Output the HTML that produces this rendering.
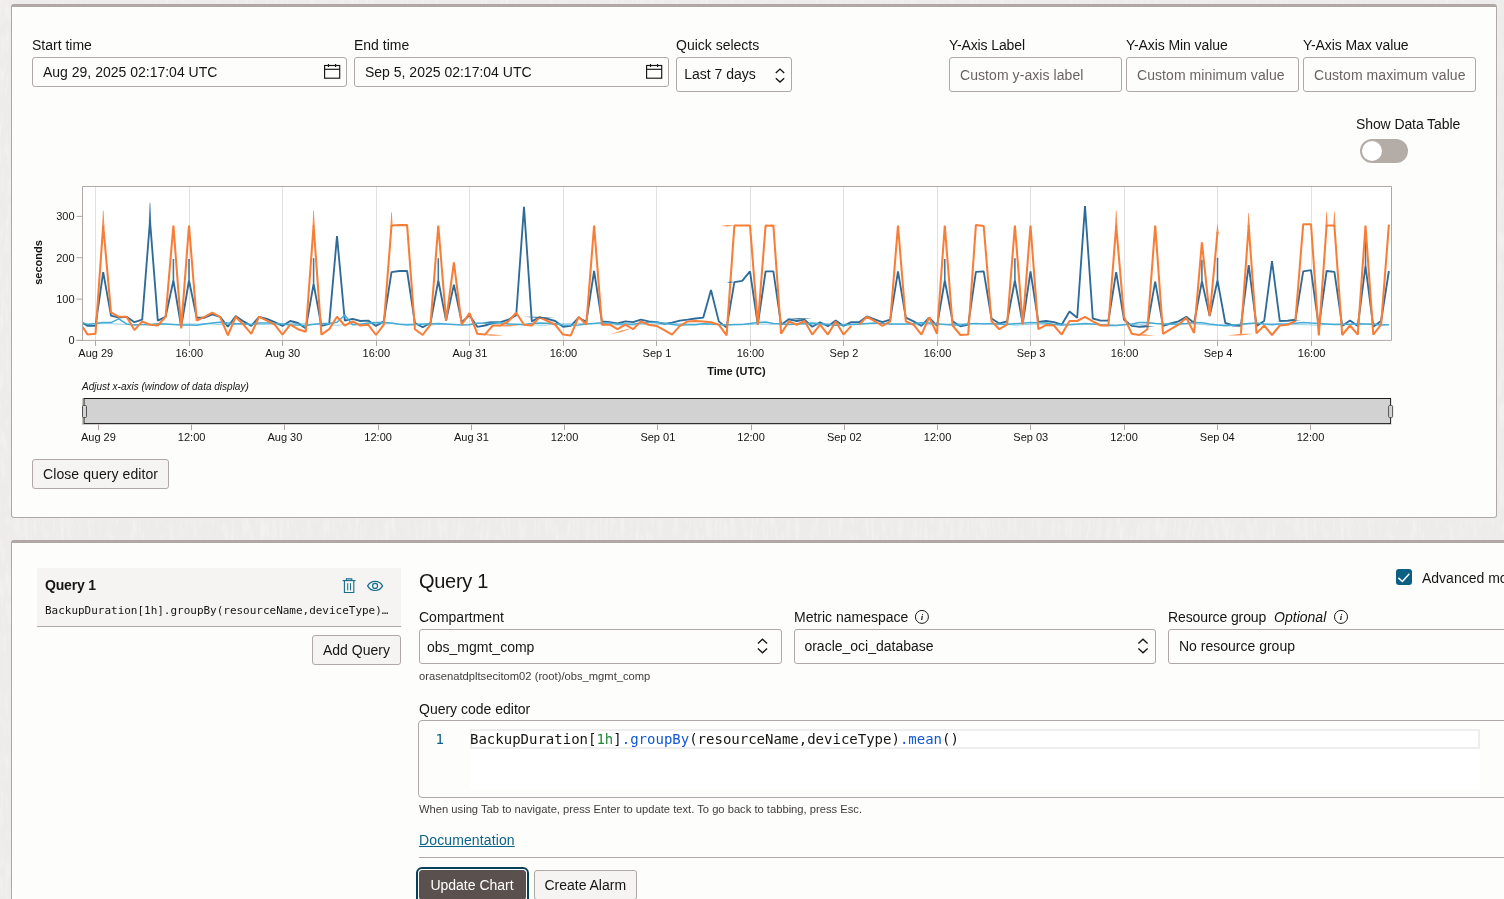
<!DOCTYPE html>
<html lang="en">
<head>
<meta charset="utf-8">
<title>Metrics Explorer</title>
<style>
*{box-sizing:border-box;}
html,body{margin:0;padding:0;overflow:hidden;}
body{width:1504px;height:899px;overflow:hidden;position:relative;background:#eeeceb;
 font-family:"Liberation Sans",sans-serif;font-size:14px;color:#161513;}
.abs,.panel,.lbl,.inp,.btn,.sel,.txt{position:absolute;}
.panel{background:#fdfdfc;border:1px solid #b0a8a4;border-top:3px solid #b0a8a4;border-radius:3px;}
.lbl{font-size:14px;line-height:16px;white-space:nowrap;color:#161513;}
.inp,.sel{border:1px solid #b0a8a4;border-radius:3px;background:#fdfdfc;font-size:14px;white-space:nowrap;color:#161513;}
.inp span,.sel span,.btn span{position:absolute;line-height:16px;white-space:nowrap;}
.ph{color:#6a6461;}
.btn{border:1px solid #b0a8a4;border-radius:3px;background:#f5f4f2;font-size:14px;color:#161513;}
.small{font-size:11.2px;line-height:13px;color:#3f3b39;white-space:nowrap;position:absolute;}
svg{position:absolute;left:0;top:0;overflow:visible;}
svg text{font-family:"Liberation Sans",sans-serif;fill:#161513;}
.tk{font-size:11px;}
.b{font-weight:bold;}
.adj{font-size:10px;font-style:italic;}
.mono{font-family:"DejaVu Sans Mono","Liberation Mono",monospace;}
</style>
</head>
<body>
<div id="root" style="position:absolute;left:0;top:0;width:1504px;height:899px;overflow:hidden;will-change:transform;">

<!-- subtle page background texture -->
<svg width="1504" height="899" viewBox="0 0 1504 899" aria-hidden="true">
<defs><filter id="tx" x="0" y="0" width="100%" height="100%" color-interpolation-filters="sRGB">
<feTurbulence type="turbulence" baseFrequency="0.2 0.035" numOctaves="2" seed="11" result="n"/>
<feColorMatrix in="n" type="matrix" values="0 0 0 0 1  0 0 0 0 1  0 0 0 0 1  0.9 0 0 0 -0.12"/>
</filter></defs>
<rect x="0" y="0" width="1504" height="899" fill="#ffffff" filter="url(#tx)" opacity="0.55"/>
</svg>
<!-- ============ Panel 1 : chart ============ -->
<div class="panel" style="left:11px;top:4px;width:1486px;height:514px;"></div>

<div class="lbl" style="left:32px;top:37px;">Start time</div>
<div class="inp" style="left:32px;top:57px;width:315px;height:30px;"><span style="left:10px;top:6px;">Aug 29, 2025 02:17:04 UTC</span></div>
<div class="lbl" style="left:354px;top:37px;">End time</div>
<div class="inp" style="left:354px;top:57px;width:315px;height:30px;"><span style="left:10px;top:6px;">Sep 5, 2025 02:17:04 UTC</span></div>
<div class="lbl" style="left:676px;top:37px;">Quick selects</div>
<div class="sel" style="left:676px;top:57px;width:116px;height:35px;"><span style="left:7.2px;top:7.5px;">Last 7 days</span></div>

<div class="lbl" style="left:949px;top:37px;letter-spacing:-0.12px;">Y-Axis Label</div>
<div class="inp" style="left:949px;top:57px;width:173px;height:35px;"><span class="ph" style="left:10px;top:9px;letter-spacing:0.07px;">Custom y-axis label</span></div>
<div class="lbl" style="left:1126px;top:37px;letter-spacing:-0.08px;">Y-Axis Min value</div>
<div class="inp" style="left:1126px;top:57px;width:173px;height:35px;"><span class="ph" style="left:10px;top:9px;letter-spacing:0.07px;">Custom minimum value</span></div>
<div class="lbl" style="left:1303px;top:37px;letter-spacing:-0.08px;">Y-Axis Max value</div>
<div class="inp" style="left:1303px;top:57px;width:173px;height:35px;"><span class="ph" style="left:10px;top:9px;letter-spacing:0.07px;">Custom maximum value</span></div>

<div class="lbl" style="left:1356px;top:116px;letter-spacing:-0.1px;">Show Data Table</div>
<div class="abs" style="left:1360px;top:139px;width:48px;height:24px;border-radius:12px;background:#b4aca7;">
  <div class="abs" style="left:2px;top:2px;width:20px;height:20px;border-radius:10px;background:#ffffff;"></div>
</div>

<div class="btn" style="left:32px;top:459px;width:137px;height:30px;"><span style="left:10px;top:6px;letter-spacing:0.08px;">Close query editor</span></div>

<!-- ============ Panel 2 : query editor ============ -->
<div class="panel" style="left:11px;top:540px;width:1560px;height:420px;"></div>

<div class="abs" style="left:37px;top:568px;width:364px;height:59px;background:#f5f4f2;border-bottom:1px solid #b0a8a4;"></div>
<div class="lbl" style="left:45px;top:577px;font-weight:bold;letter-spacing:-0.18px;">Query 1</div>
<div class="abs mono" style="left:45px;top:604px;font-size:10.98px;line-height:14px;white-space:nowrap;">BackupDuration[1h].groupBy(resourceName,deviceType)…</div>
<div class="btn" style="left:312px;top:635px;width:89px;height:30px;"><span style="left:10px;top:6px;">Add Query</span></div>

<div class="abs" style="left:419px;top:569px;font-size:20px;line-height:24px;white-space:nowrap;letter-spacing:-0.3px;">Query 1</div>

<div class="abs" style="left:1396px;top:569px;width:16px;height:16px;border-radius:3px;background:#0b5f82;"></div>
<div class="lbl" style="left:1422px;top:570px;">Advanced mode</div>

<div class="lbl" style="left:419px;top:609px;">Compartment</div>
<div class="sel" style="left:419px;top:629px;width:363px;height:35px;"><span style="left:7px;top:9px;">obs_mgmt_comp</span></div>
<div class="small" style="left:419px;top:670px;">orasenatdpltsecitom02 (root)/obs_mgmt_comp</div>

<div class="lbl" style="left:794px;top:609px;">Metric namespace</div>
<div class="sel" style="left:794px;top:629px;width:362px;height:35px;"><span style="left:9.4px;top:8px;">oracle_oci_database</span></div>

<div class="lbl" style="left:1168px;top:609px;letter-spacing:-0.1px;">Resource group&nbsp; <i style="letter-spacing:0;margin-left:0.3px;">Optional</i></div>
<div class="sel" style="left:1168px;top:629px;width:380px;height:35px;"><span style="left:10px;top:8px;">No resource group</span></div>

<div class="lbl" style="left:419px;top:701px;">Query code editor</div>
<div class="abs" style="left:418px;top:720px;width:1120px;height:78px;border:1px solid #b0a8a4;border-radius:4px;background:#fdfdfc;"></div>
<div class="abs" style="left:470px;top:729px;width:1010px;height:60px;background:#ffffff;"></div>
<div class="abs" style="left:470px;top:729px;width:1010px;height:20px;border:2px solid #eeeeee;"></div>
<div class="abs mono" style="left:432px;top:731px;width:12px;text-align:right;font-size:14px;line-height:17px;color:#0b5f82;">1</div>
<div class="abs mono" style="left:470px;top:731px;font-size:14px;line-height:17px;white-space:pre;">BackupDuration[<span style="color:#21893a">1h</span>]<span style="color:#1157d6">.groupBy</span>(resourceName,deviceType)<span style="color:#1157d6">.mean</span>()</div>

<div class="small" style="left:419px;top:803px;">When using Tab to navigate, press Enter to update text. To go back to tabbing, press Esc.</div>
<div class="lbl" style="left:419px;top:832px;color:#0c6387;text-decoration:underline;letter-spacing:0.12px;">Documentation</div>
<div class="abs" style="left:419px;top:857px;width:1120px;height:1px;background:#b0a8a4;"></div>

<div class="abs" style="left:416px;top:867px;width:113px;height:40px;border:2px solid #06405b;border-radius:6px;background:#fdfdfc;"></div>
<div class="btn" style="left:419px;top:870px;width:107px;height:30px;background:#5a514e;border-color:#5a514e;color:#ffffff;"><span style="left:10.4px;top:6px;">Update Chart</span></div>
<div class="btn" style="left:534px;top:870px;width:103px;height:30px;"><span style="left:9.4px;top:6px;">Create Alarm</span></div>

<!-- ============ SVG overlay: chart + icons ============ -->
<svg width="1504" height="899" viewBox="0 0 1504 899">
<g>
<rect x="82.5" y="186.5" width="1309" height="154" fill="#ffffff" stroke="none"/>
<line x1="95.50" y1="187" x2="95.50" y2="340" stroke="#e1e1e1" stroke-width="1"/>
<line x1="189.50" y1="187" x2="189.50" y2="340" stroke="#e1e1e1" stroke-width="1"/>
<line x1="282.50" y1="187" x2="282.50" y2="340" stroke="#e1e1e1" stroke-width="1"/>
<line x1="376.50" y1="187" x2="376.50" y2="340" stroke="#e1e1e1" stroke-width="1"/>
<line x1="469.50" y1="187" x2="469.50" y2="340" stroke="#e1e1e1" stroke-width="1"/>
<line x1="563.50" y1="187" x2="563.50" y2="340" stroke="#e1e1e1" stroke-width="1"/>
<line x1="656.50" y1="187" x2="656.50" y2="340" stroke="#e1e1e1" stroke-width="1"/>
<line x1="750.50" y1="187" x2="750.50" y2="340" stroke="#e1e1e1" stroke-width="1"/>
<line x1="843.50" y1="187" x2="843.50" y2="340" stroke="#e1e1e1" stroke-width="1"/>
<line x1="937.50" y1="187" x2="937.50" y2="340" stroke="#e1e1e1" stroke-width="1"/>
<line x1="1030.50" y1="187" x2="1030.50" y2="340" stroke="#e1e1e1" stroke-width="1"/>
<line x1="1124.50" y1="187" x2="1124.50" y2="340" stroke="#e1e1e1" stroke-width="1"/>
<line x1="1217.50" y1="187" x2="1217.50" y2="340" stroke="#e1e1e1" stroke-width="1"/>
<line x1="1311.50" y1="187" x2="1311.50" y2="340" stroke="#e1e1e1" stroke-width="1"/>
</g>
<g stroke-linecap="butt">
<path d="M82.5,323.0 L87.7,325.9 L95.5,325.9 L103.2,272.2 L111.0,315.6 L118.8,317.7 L126.6,316.8 L134.4,322.2 L142.2,319.7 L150.0,220.5 L157.8,320.6 L165.6,316.8 L173.4,280.5 L181.2,326.8 L189.0,280.5 L196.7,317.7 L204.5,317.7 L212.3,314.4 L220.1,316.8 L227.9,326.8 L235.7,316.0 L243.5,321.4 L251.3,325.9 L259.1,316.8 L266.9,318.9 L274.7,322.2 L282.5,325.9 L290.2,321.0 L298.0,323.0 L305.8,328.4 L313.6,283.8 L321.4,325.9 L329.2,323.9 L337.0,236.2 L344.8,320.6 L352.6,318.9 L360.4,321.0 L368.2,320.6 L376.0,325.9 L383.8,321.4 L391.5,272.2 L399.3,271.0 L407.1,271.0 L414.9,323.0 L422.7,327.2 L430.5,323.0 L438.3,280.5 L446.1,320.6 L453.9,284.6 L461.7,322.2 L469.5,315.2 L477.3,326.8 L485.0,325.5 L492.8,323.0 L500.6,322.2 L508.4,319.7 L516.2,315.2 L524.0,206.9 L531.8,321.4 L539.6,317.3 L547.4,318.9 L555.2,321.0 L563.0,326.8 L570.8,325.9 L578.6,317.7 L586.3,321.8 L594.1,271.0 L601.9,321.4 L609.7,322.2 L617.5,323.5 L625.3,321.4 L633.1,322.2 L640.9,319.7 L648.7,321.4 L656.5,322.2 L664.3,323.9 L672.1,322.6 L679.9,320.6 L687.6,319.7 L695.4,318.5 L703.2,317.7 L711.0,290.0 L718.8,321.4 L726.6,327.6 L734.4,282.1 L742.2,280.9 L750.0,271.4 L757.8,324.7 L765.6,271.4 L773.4,271.4 L781.1,324.7 L788.9,319.3 L796.7,321.0 L804.5,319.7 L812.3,326.8 L820.1,322.2 L827.9,326.3 L835.7,320.6 L843.5,325.9 L851.3,322.2 L859.1,322.2 L866.9,316.4 L874.6,319.3 L882.4,322.2 L890.2,319.7 L898.0,271.4 L905.8,317.7 L913.6,321.4 L921.4,325.9 L929.2,317.7 L937.0,325.9 L944.8,280.5 L952.6,321.4 L960.4,326.3 L968.2,324.7 L975.9,271.8 L983.7,271.4 L991.5,318.5 L999.3,323.5 L1007.1,321.4 L1014.9,280.5 L1022.7,323.9 L1030.5,271.4 L1038.3,321.8 L1046.1,321.0 L1053.9,322.2 L1061.7,324.7 L1069.5,311.5 L1077.2,317.7 L1085.0,206.1 L1092.8,318.5 L1100.6,320.6 L1108.4,320.6 L1116.2,272.2 L1124.0,319.7 L1131.8,325.9 L1139.6,326.8 L1147.4,325.9 L1155.2,281.7 L1163.0,325.9 L1170.7,323.5 L1178.5,321.4 L1186.3,316.8 L1194.1,323.0 L1201.9,281.3 L1209.7,316.0 L1217.5,280.5 L1225.3,323.0 L1233.1,325.5 L1240.9,325.9 L1248.7,265.2 L1256.5,325.9 L1264.2,321.0 L1272.0,261.0 L1279.8,321.0 L1287.6,320.6 L1295.4,319.7 L1303.2,271.4 L1311.0,270.1 L1318.8,326.8 L1326.6,271.0 L1334.4,271.8 L1342.2,325.9 L1350.0,320.6 L1357.8,325.9 L1365.5,266.0 L1373.3,326.8 L1381.1,321.0 L1388.9,271.0" fill="none" stroke="#2e6b98" stroke-width="1.85" stroke-linejoin="bevel"/>
<path d="M148.84,222.0 L149.69,202.8 L150.29,202.8 L151.14,222.0 Z" fill="#2e6b98" opacity="0.92"/>
<path d="M173.4,280.5 L173.4,259.0" stroke="#2e6b98" stroke-width="1.6" opacity="0.9"/>
<path d="M189.0,280.5 L189.0,259.0" stroke="#2e6b98" stroke-width="1.6" opacity="0.9"/>
<path d="M313.6,283.8 L313.6,258.2" stroke="#2e6b98" stroke-width="1.6" opacity="0.9"/>
<path d="M438.3,280.5 L438.3,258.2" stroke="#2e6b98" stroke-width="1.6" opacity="0.9"/>
<path d="M944.8,280.5 L944.8,259.0" stroke="#2e6b98" stroke-width="1.6" opacity="0.9"/>
<path d="M1014.9,280.5 L1014.9,258.2" stroke="#2e6b98" stroke-width="1.6" opacity="0.9"/>
<path d="M1201.9,281.3 L1201.9,259.8" stroke="#2e6b98" stroke-width="1.6" opacity="0.9"/>
<path d="M1217.5,280.5 L1217.5,257.7" stroke="#2e6b98" stroke-width="1.6" opacity="0.9"/>
<path d="M1365.5,266.0 L1365.5,241.2" stroke="#2e6b98" stroke-width="1.6" opacity="0.9"/>
<path d="M82.5,323.5 L87.7,323.8 L95.5,324.0 L103.2,323.6 L111.0,323.7 L118.8,324.1 L126.6,324.4 L134.4,324.6 L142.2,324.6 L150.0,325.0 L157.8,324.4 L165.6,324.3 L173.4,324.3 L181.2,324.2 L189.0,323.9 L196.7,324.0 L204.5,323.8 L212.3,323.9 L220.1,324.7 L227.9,324.4 L235.7,324.4 L243.5,324.4 L251.3,324.7 L259.1,324.6 L266.9,324.3 L274.7,324.1 L282.5,324.0 L290.2,323.6 L298.0,323.5 L305.8,323.8 L313.6,324.5 L321.4,324.6 L329.2,324.6 L337.0,325.3 L344.8,324.6 L352.6,324.1 L360.4,323.9 L368.2,323.7 L376.0,323.7 L383.8,324.0 L391.5,323.5 L399.3,324.2 L407.1,324.0 L414.9,324.1 L422.7,324.9 L430.5,325.0 L438.3,324.4 L446.1,324.4 L453.9,324.7 L461.7,324.4 L469.5,324.2 L477.3,323.3 L485.0,323.4 L492.8,324.2 L500.6,323.8 L508.4,323.9 L516.2,324.5 L524.0,325.0 L531.8,324.8 L539.6,325.1 L547.4,325.0 L555.2,323.8 L563.0,323.8 L570.8,323.7 L578.6,323.2 L586.3,323.8 L594.1,323.6 L601.9,323.9 L609.7,324.8 L617.5,325.0 L625.3,325.1 L633.1,325.1 L640.9,324.6 L648.7,324.6 L656.5,324.2 L664.3,324.2 L672.1,323.3 L679.9,323.8 L687.6,323.9 L695.4,324.0 L703.2,324.0 L711.0,324.7 L718.8,324.4 L726.6,324.9 L734.4,324.8 L742.2,324.5 L750.0,324.7 L757.8,324.0 L765.6,324.1 L773.4,324.2 L781.1,323.4 L788.9,324.2 L796.7,324.2 L804.5,324.3 L812.3,324.7 L820.1,325.1 L827.9,324.9 L835.7,324.7 L843.5,324.2 L851.3,324.5 L859.1,323.8 L866.9,323.9 L874.6,323.9 L882.4,323.5 L890.2,324.0 L898.0,324.3 L905.8,324.4 L913.6,324.4 L921.4,325.0 L929.2,324.7 L937.0,324.6 L944.8,324.3 L952.6,323.8 L960.4,323.8 L968.2,323.6 L975.9,323.7 L983.7,323.4 L991.5,324.0 L999.3,324.1 L1007.1,324.3 L1014.9,325.1 L1022.7,324.8 L1030.5,324.3 L1038.3,324.1 L1046.1,324.5 L1053.9,324.3 L1061.7,323.8 L1069.5,324.1 L1077.2,324.0 L1085.0,324.4 L1092.8,324.1 L1100.6,324.3 L1108.4,324.4 L1116.2,325.2 L1124.0,324.6 L1131.8,324.5 L1139.6,324.7 L1147.4,323.7 L1155.2,323.3 L1163.0,324.0 L1170.7,323.2 L1178.5,324.0 L1186.3,324.1 L1194.1,323.9 L1201.9,324.4 L1209.7,325.2 L1217.5,325.0 L1225.3,324.8 L1233.1,324.7 L1240.9,324.5 L1248.7,324.1 L1256.5,323.5 L1264.2,324.1 L1272.0,323.7 L1279.8,324.0 L1287.6,324.7 L1295.4,324.7 L1303.2,324.7 L1311.0,324.9 L1318.8,325.3 L1326.6,324.2 L1334.4,324.1 L1342.2,323.6 L1350.0,324.2 L1357.8,323.9 L1365.5,324.1 L1373.3,323.6 L1381.1,324.3 L1388.9,324.8" fill="none" stroke="#43abd4" stroke-width="1" stroke-linejoin="round" opacity="0.55"/>
<path d="M82.5,322.6 L87.7,324.4 L95.5,323.6 L103.2,322.4 L111.0,322.6 L118.8,318.9 L126.6,323.9 L134.4,324.9 L142.2,324.6 L150.0,324.5 L157.8,323.7 L165.6,323.9 L173.4,324.5 L181.2,324.9 L189.0,325.0 L196.7,325.2 L204.5,324.1 L212.3,322.9 L220.1,322.3 L227.9,322.9 L235.7,323.8 L243.5,323.8 L251.3,324.4 L259.1,323.1 L266.9,323.1 L274.7,323.3 L282.5,324.1 L290.2,324.9 L298.0,325.1 L305.8,325.4 L313.6,324.3 L321.4,323.5 L329.2,323.4 L337.0,322.2 L344.8,315.2 L352.6,324.7 L360.4,324.2 L368.2,323.0 L376.0,322.6 L383.8,322.6 L391.5,323.1 L399.3,324.2 L407.1,325.0 L414.9,324.6 L422.7,324.1 L430.5,323.9 L438.3,323.6 L446.1,324.1 L453.9,324.5 L461.7,324.9 L469.5,324.7 L477.3,323.2 L485.0,323.0 L492.8,322.6 L500.6,322.8 L508.4,324.0 L516.2,324.3 L524.0,324.5 L531.8,323.4 L539.6,322.9 L547.4,323.2 L555.2,323.7 L563.0,325.1 L570.8,325.2 L578.6,325.0 L586.3,324.1 L594.1,323.4 L601.9,322.8 L609.7,323.1 L617.5,324.0 L625.3,324.1 L633.1,324.2 L640.9,322.9 L648.7,322.4 L656.5,322.3 L664.3,323.2 L672.1,324.6 L679.9,325.2 L687.6,324.8 L695.4,324.7 L703.2,323.7 L711.0,323.9 L718.8,324.4 L726.6,325.0 L734.4,324.6 L742.2,324.6 L750.0,323.5 L757.8,322.6 L765.6,322.1 L773.4,323.4 L781.1,323.9 L788.9,324.4 L796.7,324.0 L804.5,323.5 L812.3,323.0 L820.1,323.7 L827.9,324.3 L835.7,325.2 L843.5,325.0 L851.3,324.5 L859.1,324.2 L866.9,323.4 L874.6,323.1 L882.4,323.5 L890.2,323.9 L898.0,324.1 L905.8,324.0 L913.6,323.5 L921.4,322.7 L929.2,323.0 L937.0,323.7 L944.8,324.4 L952.6,325.1 L960.4,325.0 L968.2,324.1 L975.9,323.5 L983.7,323.9 L991.5,323.6 L999.3,324.3 L1007.1,324.3 L1014.9,323.8 L1022.7,323.2 L1030.5,322.5 L1038.3,322.8 L1046.1,323.1 L1053.9,324.5 L1061.7,325.0 L1069.5,324.7 L1077.2,324.2 L1085.0,323.6 L1092.8,324.0 L1100.6,324.8 L1108.4,325.4 L1116.2,325.5 L1124.0,324.7 L1131.8,324.0 L1139.6,322.5 L1147.4,322.6 L1155.2,323.5 L1163.0,324.1 L1170.7,324.3 L1178.5,324.0 L1186.3,323.5 L1194.1,322.6 L1201.9,322.8 L1209.7,324.1 L1217.5,325.0 L1225.3,325.7 L1233.1,325.3 L1240.9,324.3 L1248.7,323.6 L1256.5,323.1 L1264.2,324.1 L1272.0,324.7 L1279.8,324.0 L1287.6,323.8 L1295.4,323.2 L1303.2,322.4 L1311.0,323.0 L1318.8,323.4 L1326.6,324.0 L1334.4,324.6 L1342.2,324.5 L1350.0,324.2 L1357.8,323.7 L1365.5,324.0 L1373.3,324.2 L1381.1,325.0 L1388.9,324.8" fill="none" stroke="#43abd4" stroke-width="1.5" stroke-linejoin="round"/>
<path d="M82.5,326.8 L87.7,334.6 L95.5,333.8 L103.2,225.5 L111.0,312.3 L118.8,316.8 L126.6,316.8 L134.4,330.1 L142.2,321.4 L150.0,324.7 L157.8,325.5 L165.6,316.8 L173.4,225.5 L181.2,328.4 L189.0,225.5 L196.7,320.6 L204.5,316.8 L212.3,312.7 L220.1,316.8 L227.9,335.4 L235.7,316.8 L243.5,324.7 L251.3,333.8 L259.1,316.8 L266.9,320.6 L274.7,324.7 L282.5,334.6 L290.2,324.7 L298.0,329.2 L305.8,331.7 L313.6,225.5 L321.4,334.6 L329.2,329.2 L337.0,316.8 L344.8,325.5 L352.6,321.4 L360.4,325.5 L368.2,324.7 L376.0,335.0 L383.8,324.7 L391.5,225.5 L399.3,225.1 L407.1,225.1 L414.9,329.2 L422.7,335.0 L430.5,324.7 L438.3,225.5 L446.1,320.6 L453.9,262.3 L461.7,324.7 L469.5,313.1 L477.3,333.8 L485.0,334.6 L492.8,325.5 L500.6,325.5 L508.4,321.4 L516.2,312.7 L524.0,324.7 L531.8,325.5 L539.6,317.3 L547.4,321.0 L555.2,324.7 L563.0,334.6 L570.8,335.4 L578.6,316.8 L586.3,324.7 L594.1,225.5 L601.9,324.7 L609.7,324.7 L617.5,329.2 L625.3,324.7 L633.1,329.2 L640.9,321.4 L648.7,324.7 L656.5,325.9 L664.3,330.1 L672.1,334.6 L679.9,325.9 L687.6,321.4 L695.4,321.0 L703.2,321.4 L711.0,322.2 L718.8,324.7 L726.6,335.4 L734.4,225.5 L742.2,225.5 L750.0,225.5 L757.8,324.7 L765.6,225.5 L773.4,225.9 L781.1,333.8 L788.9,321.4 L796.7,324.7 L804.5,321.0 L812.3,334.6 L820.1,324.7 L827.9,334.6 L835.7,321.4 L843.5,334.6 L851.3,325.9 M859.1,324.7 L866.9,316.8 L874.6,321.0 L882.4,325.9 L890.2,321.4 L898.0,225.5 L905.8,321.4 L913.6,324.7 L921.4,334.6 L929.2,317.3 L937.0,333.8 L944.8,225.5 L952.6,325.5 L960.4,335.0 L968.2,334.6 L975.9,225.1 L983.7,225.9 L991.5,321.0 L999.3,329.2 L1007.1,324.7 L1014.9,225.5 L1022.7,324.7 L1030.5,225.5 L1038.3,329.2 L1046.1,325.1 L1053.9,325.5 L1061.7,334.6 L1069.5,321.0 L1077.2,321.0 L1085.0,316.8 L1092.8,321.4 L1100.6,325.5 L1108.4,325.5 L1116.2,225.5 L1124.0,316.8 L1131.8,333.8 L1139.6,335.0 L1147.4,329.2 L1155.2,225.5 L1163.0,333.8 L1170.7,329.2 L1178.5,324.7 L1186.3,317.7 L1194.1,333.0 L1201.9,242.4 L1209.7,316.0 L1217.5,232.1 M1240.9,333.8 L1248.7,225.5 L1256.5,333.4 L1264.2,325.5 L1272.0,335.0 L1279.8,325.5 L1287.6,324.7 L1295.4,321.0 L1303.2,224.3 L1311.0,224.3 L1318.8,335.4 L1326.6,225.5 L1334.4,225.5 L1342.2,335.0 L1350.0,325.5 L1357.8,334.6 L1365.5,225.5 L1373.3,334.6 L1381.1,324.7 L1388.9,224.7" fill="none" stroke="#f87e38" stroke-width="2.05" stroke-linejoin="bevel"/>
<path d="M102.09,227.0 L102.94,210.6 L103.54,210.6 L104.39,227.0 Z" fill="#f87e38" opacity="0.9"/>
<path d="M312.48,227.0 L313.33,210.6 L313.93,210.6 L314.78,227.0 Z" fill="#f87e38" opacity="0.9"/>
<path d="M390.40,227.0 L391.25,212.3 L391.85,212.3 L392.70,227.0 Z" fill="#f87e38" opacity="0.9"/>
<path d="M1115.05,227.0 L1115.90,210.6 L1116.50,210.6 L1117.35,227.0 Z" fill="#f87e38" opacity="0.9"/>
<path d="M1216.35,233.6 L1217.20,224.7 L1217.80,224.7 L1218.65,233.6 Z" fill="#f87e38" opacity="0.9"/>
<path d="M1247.52,227.0 L1248.37,213.1 L1248.97,213.1 L1249.82,227.0 Z" fill="#f87e38" opacity="0.9"/>
<path d="M1325.44,227.0 L1326.29,211.9 L1326.89,211.9 L1327.74,227.0 Z" fill="#f87e38" opacity="0.9"/>
<path d="M1333.23,227.0 L1334.08,211.9 L1334.68,211.9 L1335.53,227.0 Z" fill="#f87e38" opacity="0.9"/>
<path d="M609.7,334.6 L621.4,330.5 L633.1,328.0 L621.4,332.1 Z" fill="#f87e38" opacity="0.85"/>
<path d="M1227.6,335.4 L1240.5,333.8 L1253.3,333.8 L1240.5,335.4 Z" fill="#f87e38" opacity="0.85"/>
<path d="M478.8,334.6 L491.3,334.2 L503.8,335.4 L491.3,335.8 Z" fill="#f87e38" opacity="0.85"/>
<path d="M492.8,325.9 L506.5,324.9 L520.1,325.5 L506.5,326.5 Z" fill="#f87e38" opacity="0.85"/>
<path d="M720.4,225.9 L727.4,224.9 L734.4,225.5 L727.4,226.5 Z" fill="#f87e38" opacity="0.85"/>
<path d="M765.6,225.5 L771.4,224.5 L777.2,225.1 L771.4,226.1 Z" fill="#f87e38" opacity="0.85"/>
<path d="M1131.8,334.6 L1143.5,334.2 L1155.2,335.4 L1143.5,335.8 Z" fill="#f87e38" opacity="0.85"/>
<path d="M726.6,282.5 L730.5,281.5 L734.4,282.1 L730.5,283.1 Z" fill="#2e6b98" opacity="0.85"/>
<path d="M481.2,322.6 L490.9,321.2 L500.6,321.4 L490.9,322.8 Z" fill="#2e6b98" opacity="0.85"/>
<path d="M524.0,316.8 L539.6,316.7 L555.2,318.1 L539.6,318.3 Z" fill="#2e6b98" opacity="0.85"/>
<path d="M1275.9,321.4 L1288.8,320.0 L1301.7,320.1 L1288.8,321.6 Z" fill="#2e6b98" opacity="0.85"/>
<path d="M1131.8,326.3 L1143.5,325.8 L1155.2,326.8 L1143.5,327.4 Z" fill="#2e6b98" opacity="0.85"/>
<path d="M785.0,318.9 L798.7,317.9 L812.3,318.5 L798.7,319.5 Z" fill="#2e6b98" opacity="0.85"/>
</g>
<g>
<path d="M82.5,340.4 V186.5 H1391.5 V340.4" fill="none" stroke="#b0a8a4" stroke-width="1"/>
<line x1="76.5" y1="340.4" x2="1391.5" y2="340.4" stroke="#b0a8a4" stroke-width="1"/>
<line x1="76.5" y1="340.4" x2="82.5" y2="340.4" stroke="#b0a8a4" stroke-width="1"/>
<text x="74.6" y="344.3" text-anchor="end" class="tk">0</text>
<line x1="76.5" y1="299.1" x2="82.5" y2="299.1" stroke="#b0a8a4" stroke-width="1"/>
<text x="74.6" y="303.0" text-anchor="end" class="tk">100</text>
<line x1="76.5" y1="257.7" x2="82.5" y2="257.7" stroke="#b0a8a4" stroke-width="1"/>
<text x="74.6" y="261.6" text-anchor="end" class="tk">200</text>
<line x1="76.5" y1="216.4" x2="82.5" y2="216.4" stroke="#b0a8a4" stroke-width="1"/>
<text x="74.6" y="220.3" text-anchor="end" class="tk">300</text>
<line x1="95.50" y1="340.4" x2="95.50" y2="346" stroke="#b0a8a4" stroke-width="1"/>
<text x="95.75" y="356.6" text-anchor="middle" class="tk">Aug 29</text>
<line x1="189.50" y1="340.4" x2="189.50" y2="346" stroke="#b0a8a4" stroke-width="1"/>
<text x="189.28" y="356.6" text-anchor="middle" class="tk">16:00</text>
<line x1="282.50" y1="340.4" x2="282.50" y2="346" stroke="#b0a8a4" stroke-width="1"/>
<text x="282.81" y="356.6" text-anchor="middle" class="tk">Aug 30</text>
<line x1="376.50" y1="340.4" x2="376.50" y2="346" stroke="#b0a8a4" stroke-width="1"/>
<text x="376.34" y="356.6" text-anchor="middle" class="tk">16:00</text>
<line x1="469.50" y1="340.4" x2="469.50" y2="346" stroke="#b0a8a4" stroke-width="1"/>
<text x="469.87" y="356.6" text-anchor="middle" class="tk">Aug 31</text>
<line x1="563.50" y1="340.4" x2="563.50" y2="346" stroke="#b0a8a4" stroke-width="1"/>
<text x="563.40" y="356.6" text-anchor="middle" class="tk">16:00</text>
<line x1="656.50" y1="340.4" x2="656.50" y2="346" stroke="#b0a8a4" stroke-width="1"/>
<text x="656.93" y="356.6" text-anchor="middle" class="tk">Sep 1</text>
<line x1="750.50" y1="340.4" x2="750.50" y2="346" stroke="#b0a8a4" stroke-width="1"/>
<text x="750.46" y="356.6" text-anchor="middle" class="tk">16:00</text>
<line x1="843.50" y1="340.4" x2="843.50" y2="346" stroke="#b0a8a4" stroke-width="1"/>
<text x="843.99" y="356.6" text-anchor="middle" class="tk">Sep 2</text>
<line x1="937.50" y1="340.4" x2="937.50" y2="346" stroke="#b0a8a4" stroke-width="1"/>
<text x="937.52" y="356.6" text-anchor="middle" class="tk">16:00</text>
<line x1="1030.50" y1="340.4" x2="1030.50" y2="346" stroke="#b0a8a4" stroke-width="1"/>
<text x="1031.05" y="356.6" text-anchor="middle" class="tk">Sep 3</text>
<line x1="1124.50" y1="340.4" x2="1124.50" y2="346" stroke="#b0a8a4" stroke-width="1"/>
<text x="1124.58" y="356.6" text-anchor="middle" class="tk">16:00</text>
<line x1="1217.50" y1="340.4" x2="1217.50" y2="346" stroke="#b0a8a4" stroke-width="1"/>
<text x="1218.11" y="356.6" text-anchor="middle" class="tk">Sep 4</text>
<line x1="1311.50" y1="340.4" x2="1311.50" y2="346" stroke="#b0a8a4" stroke-width="1"/>
<text x="1311.64" y="356.6" text-anchor="middle" class="tk">16:00</text>
<text x="736.5" y="374.6" text-anchor="middle" class="tk b">Time (UTC)</text>
<text transform="translate(42.2,262.5) rotate(-90)" text-anchor="middle" class="tk b">seconds</text>
<text x="82" y="390" class="adj">Adjust x-axis (window of data display)</text>
<rect x="84" y="398.5" width="1306.6" height="25" fill="#d2d2d2" stroke="#1c1c1c" stroke-width="1"/>
<line x1="82.5" y1="424.3" x2="1391.5" y2="424.3" stroke="#b0a8a4" stroke-width="1" opacity="0.7"/>
<line x1="82.5" y1="398" x2="82.5" y2="424.5" stroke="#b0a8a4" stroke-width="1" opacity="0.7"/>
<rect x="82.5" y="405.5" width="4" height="12" rx="1" fill="#d4d4d4" stroke="#444" stroke-width="0.9"/>
<rect x="1388.6" y="405.5" width="4" height="12" rx="1" fill="#d4d4d4" stroke="#444" stroke-width="0.9"/>
<line x1="98.50" y1="424.5" x2="98.50" y2="430" stroke="#b0a8a4" stroke-width="1"/>
<text x="98.40" y="440.7" text-anchor="middle" class="tk">Aug 29</text>
<line x1="191.50" y1="424.5" x2="191.50" y2="430" stroke="#b0a8a4" stroke-width="1"/>
<text x="191.64" y="440.7" text-anchor="middle" class="tk">12:00</text>
<line x1="284.50" y1="424.5" x2="284.50" y2="430" stroke="#b0a8a4" stroke-width="1"/>
<text x="284.88" y="440.7" text-anchor="middle" class="tk">Aug 30</text>
<line x1="378.50" y1="424.5" x2="378.50" y2="430" stroke="#b0a8a4" stroke-width="1"/>
<text x="378.12" y="440.7" text-anchor="middle" class="tk">12:00</text>
<line x1="471.50" y1="424.5" x2="471.50" y2="430" stroke="#b0a8a4" stroke-width="1"/>
<text x="471.36" y="440.7" text-anchor="middle" class="tk">Aug 31</text>
<line x1="564.50" y1="424.5" x2="564.50" y2="430" stroke="#b0a8a4" stroke-width="1"/>
<text x="564.60" y="440.7" text-anchor="middle" class="tk">12:00</text>
<line x1="657.50" y1="424.5" x2="657.50" y2="430" stroke="#b0a8a4" stroke-width="1"/>
<text x="657.84" y="440.7" text-anchor="middle" class="tk">Sep 01</text>
<line x1="751.50" y1="424.5" x2="751.50" y2="430" stroke="#b0a8a4" stroke-width="1"/>
<text x="751.08" y="440.7" text-anchor="middle" class="tk">12:00</text>
<line x1="844.50" y1="424.5" x2="844.50" y2="430" stroke="#b0a8a4" stroke-width="1"/>
<text x="844.32" y="440.7" text-anchor="middle" class="tk">Sep 02</text>
<line x1="937.50" y1="424.5" x2="937.50" y2="430" stroke="#b0a8a4" stroke-width="1"/>
<text x="937.56" y="440.7" text-anchor="middle" class="tk">12:00</text>
<line x1="1030.50" y1="424.5" x2="1030.50" y2="430" stroke="#b0a8a4" stroke-width="1"/>
<text x="1030.80" y="440.7" text-anchor="middle" class="tk">Sep 03</text>
<line x1="1124.50" y1="424.5" x2="1124.50" y2="430" stroke="#b0a8a4" stroke-width="1"/>
<text x="1124.04" y="440.7" text-anchor="middle" class="tk">12:00</text>
<line x1="1217.50" y1="424.5" x2="1217.50" y2="430" stroke="#b0a8a4" stroke-width="1"/>
<text x="1217.28" y="440.7" text-anchor="middle" class="tk">Sep 04</text>
<line x1="1310.50" y1="424.5" x2="1310.50" y2="430" stroke="#b0a8a4" stroke-width="1"/>
<text x="1310.52" y="440.7" text-anchor="middle" class="tk">12:00</text>
</g>
<!-- calendar icons -->
<g fill="none" stroke="#161513" stroke-width="1.15">
  <rect x="324.6" y="65.5" width="15.1" height="12.7"/><line x1="324.6" y1="69.3" x2="339.7" y2="69.3"/><line x1="328.5" y1="64" x2="328.5" y2="67"/><line x1="335.55" y1="64" x2="335.55" y2="67"/>
  <rect x="646.6" y="65.5" width="15.1" height="12.7"/><line x1="646.6" y1="69.3" x2="661.7" y2="69.3"/><line x1="650.5" y1="64" x2="650.5" y2="67"/><line x1="657.55" y1="64" x2="657.55" y2="67"/>
</g>
<!-- select chevrons -->
<g fill="none" stroke="#161513" stroke-width="1.35">
  <path d="M775.8,73 L780,69.1 L784.2,73"/><path d="M775.8,78.2 L780,82.1 L784.2,78.2"/>
  <path d="M757.9,643.5 L762.5,639.2 L767.1,643.5"/><path d="M757.9,648.5 L762.5,652.8 L767.1,648.5"/>
  <path d="M1138.4,643.5 L1143,639.2 L1147.6,643.5"/><path d="M1138.4,648.5 L1143,652.8 L1147.6,648.5"/>
</g>
<!-- checkbox tick -->
<path d="M1398.4,577.9 L1402.4,581.5 L1409.3,573.8" fill="none" stroke="#ffffff" stroke-width="1.5"/>
<!-- info icons -->
<g fill="none" stroke="#161513" stroke-width="1">
  <circle cx="921.9" cy="616.9" r="6.5"/><circle cx="1341" cy="616.9" r="6.5"/>
</g>
<text x="921.9" y="620.1" text-anchor="middle" style="font-family:'Liberation Serif',serif;font-style:italic;font-weight:bold;font-size:9px;">i</text>
<text x="1341" y="620.1" text-anchor="middle" style="font-family:'Liberation Serif',serif;font-style:italic;font-weight:bold;font-size:9px;">i</text>
<!-- trash + eye -->
<g fill="none" stroke="#166d90" stroke-width="1.1">
  <path d="M342.6,580.6 H355.6"/><path d="M346.4,580.4 V578.9 H351.8 V580.4"/>
  <path d="M344.4,580.8 V592.5 H353.8 V580.8"/>
  <path d="M347.7,583.2 V590.4 M350.5,583.2 V590.4" stroke-width="1"/>
  <path d="M367.6,585.9 C370.8,579.8 379.4,579.8 382.6,585.9 C379.4,592 370.8,592 367.6,585.9 Z" stroke-width="1.2"/>
  <circle cx="375.1" cy="585.9" r="2.5" stroke-width="1.2"/>
</g>
</svg>
</div>
</body>
</html>
